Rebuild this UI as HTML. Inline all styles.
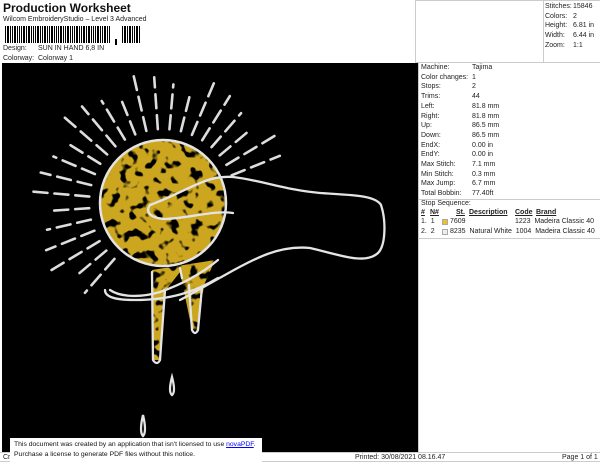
<!DOCTYPE html>
<html><head><meta charset="utf-8"><style>
*{margin:0;padding:0;box-sizing:border-box}
body{width:600px;height:464px;background:#fff;position:relative;overflow:hidden;font-family:"Liberation Sans",Arial,sans-serif;color:#222}
.t{position:absolute;font-size:7px;white-space:nowrap;line-height:9px}
#title{position:absolute;left:3px;top:1px;font-size:12px;font-weight:bold;color:#111}
#black{position:absolute;left:2px;top:63px;width:416px;height:389px;background:#000}
</style></head><body>
<div id="title">Production Worksheet</div>
<div class="t" style="left:3px;top:15px">Wilcom EmbroideryStudio – Level 3 Advanced</div>
<svg style="position:absolute;left:5px;top:26px" width="155" height="19" id="bc"></svg>
<div class="t" style="left:3px;top:44px">Design:</div><div class="t" style="left:38px;top:44px">SUN IN HAND 6,8 IN</div>
<div class="t" style="left:3px;top:54px">Colorway:</div><div class="t" style="left:38px;top:54px">Colorway 1</div>
<div style="position:absolute;left:415px;top:0;width:185px;height:63px;border:1px solid #ccc;border-right:none"></div>
<div style="position:absolute;left:543px;top:0;width:57px;height:63px;border-left:1px solid #ccc"></div>
<div class="t" style="left:545px;top:2px;line-height:9.7px">Stitches:<br>Colors:<br>Height:<br>Width:<br>Zoom:</div>
<div class="t" style="left:573px;top:2px;line-height:9.7px">15846<br>2<br>6.81 in<br>6.44 in<br>1:1</div>
<div style="position:absolute;left:418px;top:63px;width:182px;height:390px;border-left:1px solid #ccc"></div>
<div style="position:absolute;left:418px;top:199px;width:182px;border-top:1px solid #ccc"></div>
<div style="position:absolute;left:418px;top:238px;width:182px;border-top:1px solid #ccc"></div>
<div class="t" style="left:421px;top:63px;line-height:9.7px">Machine:<br>Color changes:<br>Stops:<br>Trims:<br>Left:<br>Right:<br>Up:<br>Down:<br>EndX:<br>EndY:<br>Max Stitch:<br>Min Stitch:<br>Max Jump:<br>Total Bobbin:</div>
<div class="t" style="left:472px;top:63px;line-height:9.7px">Tajima<br>1<br>2<br>44<br>81.8 mm<br>81.8 mm<br>86.5 mm<br>86.5 mm<br>0.00 in<br>0.00 in<br>7.1 mm<br>0.3 mm<br>6.7 mm<br>77.40ft</div>
<div class="t" style="left:421px;top:199px">Stop Sequence:</div>
<div class="t" style="left:421px;top:208px;font-weight:bold;text-decoration:underline">#</div>
<div class="t" style="left:430px;top:208px;font-weight:bold;text-decoration:underline">N#</div>
<div class="t" style="left:456px;top:208px;font-weight:bold;text-decoration:underline">St.</div>
<div class="t" style="left:469px;top:208px;font-weight:bold;text-decoration:underline">Description</div>
<div class="t" style="left:515px;top:208px;font-weight:bold;text-decoration:underline">Code</div>
<div class="t" style="left:536px;top:208px;font-weight:bold;text-decoration:underline">Brand</div>
<div class="t" style="left:421px;top:217px">1.&nbsp; 1</div>
<div style="position:absolute;left:442px;top:219px;width:6px;height:6px;background:#f0c020;border:1px solid #aaa"></div>
<div class="t" style="left:450px;top:217px">7609</div>
<div class="t" style="left:515px;top:217px">1223&nbsp; Madeira Classic 40</div>
<div class="t" style="left:421px;top:227px">2.&nbsp; 2</div>
<div style="position:absolute;left:442px;top:229px;width:6px;height:6px;background:#eee;border:1px solid #aaa"></div>
<div class="t" style="left:450px;top:227px">8235&nbsp; Natural White&nbsp; 1004&nbsp; Madeira Classic 40</div>
<div id="black">
<svg width="416" height="389" viewBox="2 63 416 389">
<defs>
<filter id="tx" x="0" y="0" width="1" height="1" color-interpolation-filters="sRGB"><feTurbulence type="fractalNoise" baseFrequency="0.1" numOctaves="2" seed="3"/><feColorMatrix type="matrix" values="0 0 0 0 0.8  0 0 0 0 0.65  0 0 0 0 0.12  0 0 0 9 -3.0"/></filter>
<clipPath id="cc"><circle cx="163" cy="203" r="62"/><path d="M152 270 L154 360 L160 360 L166 290 L180 272 L192 330 L198 330 L204 285 L215 260 Z"/></clipPath>
</defs>
<g id="rays" stroke="#ddd" stroke-width="2.6" stroke-linecap="round" stroke-dasharray="14 7"></g>
<g clip-path="url(#cc)"><rect x="90" y="130" width="140" height="240" fill="#000"/><rect x="90" y="130" width="140" height="240" filter="url(#tx)"/></g>
<circle cx="163" cy="203" r="63" fill="none" stroke="#e4e4e4" stroke-width="2.5"/>
<g fill="none" stroke="#e4e4e4" stroke-width="2.3" stroke-linecap="round">
<path d="M150 205 C190 190 205 175 233 177 C260 180 285 190 320 193 C350 195 375 195 381 205 C386 220 386 245 378 253 C365 265 340 255 310 248 C280 245 255 258 225 275 C205 286 190 295 180 300"/>
<path d="M150 205 C145 212 150 218 165 219 C190 218 215 210 233 213"/>
<path d="M218 260 C200 275 180 285 160 292 C140 298 120 297 110 290"/>
<path d="M218 278 C195 292 170 300 135 300 C115 300 105 297 105 290"/>
<path d="M152 272 L153 360 Q157 366 160 360 L165 290"/>
<path d="M189 285 L192 330 Q195 336 198 330 L202 287"/>
<path d="M180 268 L182 278"/>
<path d="M172 377 Q168 392 172 395 Q176 392 172 377 Z"/>
<path d="M143 415 Q139 432 143 436 Q147 432 143 415 Z"/>
</g>
</svg>
</div>
<div style="position:absolute;left:0;top:452px;width:600px;height:10px;border-top:1px solid #ccc;border-bottom:1px solid #ccc"></div>
<div class="t" style="left:3px;top:453px">Cr</div>
<div class="t" style="left:355px;top:453px">Printed: 30/08/2021 08.16.47</div>
<div class="t" style="left:562px;top:453px">Page 1 of 1</div>
<div style="position:absolute;left:10px;top:438px;width:252px;height:26px;background:#fff"></div>
<div class="t" style="left:14px;top:440px;font-size:6.8px;line-height:10px;color:#111">This document was created by an application that isn't licensed to use <span style="color:#00f;text-decoration:underline">novaPDF</span>.<br>Purchase a license to generate PDF files without this notice.</div>
<script>
var bc=document.getElementById('bc'),s='',x=0,w=[1,2,1,1,2,1,1,1,2,1,2,1,1,1,2,1,1,2,1,1,2,1,1,1,2,1,1,2,1,1,1,2,1,1,2,1,2,1,1,1,2,1,1,2,1,1,1,2,1,2,1,1,2,1];
for(var i=0;i<w.length;i++){if(x>105&&x<115){x=117;s+='<rect x="110" y="13" width="2" height="6" fill="#000"/>';}if(x>148)break;s+='<rect x="'+x+'" y="0" width="'+w[i]+'" height="17" fill="#000"/>';x+=w[i]+1;}
bc.innerHTML=s;
var g=document.getElementById('rays'),r='';
for(var a=-22;a>=-232;a-=9){var t=a*Math.PI/180,r1=74,r2=112+((Math.abs(a*7))%28);var c=Math.cos(t),sn=Math.sin(t);
r+='<line x1="'+(163+c*r1)+'" y1="'+(203+sn*r1)+'" x2="'+(163+c*r2)+'" y2="'+(203+sn*r2)+'"/>';}
g.innerHTML=r;
</script>
</body></html>
